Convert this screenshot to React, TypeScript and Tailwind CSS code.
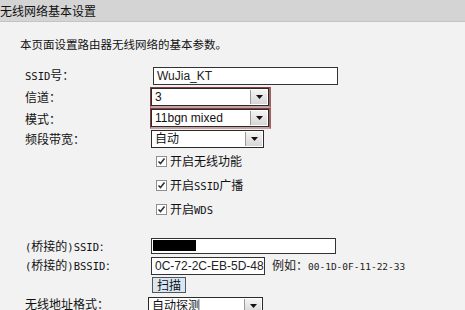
import React from "react";

const cjk = "font-['Noto_Sans_CJK_SC','Liberation_Sans',sans-serif]";
const mono = "font-['DejaVu_Sans_Mono','Noto_Sans_CJK_SC',monospace] text-[10.5px]";

function Arrow() {
  return (
    <div className="w-[17px] h-full border-l border-[#9a9a9a] bg-gradient-to-b from-[#f4f4f4] to-[#d6d6d6] flex items-center justify-center">
      <svg width="7" height="4" viewBox="0 0 7 4">
        <path d="M0 0H7L3.5 4Z" fill="#111" />
      </svg>
    </div>
  );
}

function Select({ text, w, red }: { text: string; w: string; red?: boolean }) {
  const inner = (
    <div className={`${w} h-[18px] border border-[#2a2a2a] bg-white flex items-stretch`}>
      <div className="flex-1 pl-[3px] flex items-center text-[12px] leading-none text-[#111] font-['Liberation_Sans','Noto_Sans_CJK_SC',sans-serif]">
        {text}
      </div>
      <div className="p-[1px] flex">
        <Arrow />
      </div>
    </div>
  );
  if (red) {
    return <div className="border border-[#8a3c3c] border-r-[2px] border-b-[2px] border-b-[#c9a3a3] border-r-[#a06060]">{inner}</div>;
  }
  return inner;
}

function Check({ label }: { label: React.ReactNode }) {
  return (
    <div className="h-[24px] flex items-center pl-[156px]">
      <div className="w-[11px] h-[11px] border border-[#8f8f8f] bg-white flex items-center justify-center">
        <svg width="9" height="9" viewBox="0 0 9 9">
          <path d="M1.5 4.5L3.5 6.5L7.5 1.5" stroke="#333" strokeWidth="1.6" fill="none" />
        </svg>
      </div>
      <span className={`ml-[3px] text-[12px] leading-none text-[#111] ${cjk}`}>{label}</span>
    </div>
  );
}

function Row({ label, h, children }: { label: React.ReactNode; h: string; children: React.ReactNode }) {
  return (
    <div className={`${h} flex items-center`}>
      <div className={`w-[151px] shrink-0 pl-[25px] text-[12px] leading-none text-[#111] ${cjk}`}>{label}</div>
      <div className="flex items-center">{children}</div>
    </div>
  );
}

export default function App() {
  return (
    <div className={`w-[465px] h-[310px] overflow-hidden bg-[#f2f2f2] ${cjk}`}>
      <div className="h-[22px] bg-[#d4d4d4] border-b border-[#c4c4c4] flex items-center text-[12px] text-[#111] leading-none">
        无线网络基本设置
      </div>
      <div className="mt-[15px] pl-[20px] text-[11.5px] leading-[14px] text-[#111]">
        本页面设置路由器无线网络的基本参数。
      </div>
      <div className="mt-[14px] flex flex-col">
        <Row label={<><span className={mono}>SSID</span>号：</>} h="h-[21px]">
          <div className="ml-[2px] w-[185px] h-[18px] border border-[#333] bg-white flex items-center pl-[3px] text-[12px] text-[#222] font-['Liberation_Sans',sans-serif]">
            WuJia_KT
          </div>
        </Row>
        <Row label="信道：" h="h-[22px]">
          <div className="-ml-[1px]">
            <Select text="3" w="w-[118px]" red />
          </div>
        </Row>
        <Row label="模式：" h="h-[21px]">
          <div className="-ml-[1px]">
            <Select text="11bgn mixed" w="w-[118px]" red />
          </div>
        </Row>
        <Row label="频段带宽：" h="h-[20px]">
          <Select text="自动" w="w-[113px]" />
        </Row>
        <Check label="开启无线功能" />
        <Check label={<>开启<span className={mono}>SSID</span>广播</>} />
        <Check label={<>开启<span className={mono}>WDS</span></>} />
        <div className="h-[16px]" />
        <Row label={<><span className={mono}>(</span>桥接的<span className={mono}>)SSID：</span></>} h="h-[18px]">
          <div className="w-[185px] h-[16px] border border-[#333] bg-white flex items-start p-[1px]">
            <div className="w-[43px] h-[11px] bg-black" />
          </div>
        </Row>
        <Row label={<><span className={mono}>(</span>桥接的<span className={mono}>)BSSID：</span></>} h="h-[21px]">
          <div className="w-[114px] h-[18px] border border-[#333] bg-white flex items-center pl-[3px] text-[12px] text-[#222] font-['Liberation_Sans',sans-serif]">
            0C-72-2C-EB-5D-48
          </div>
          <span className="ml-[7px] text-[12px] leading-none text-[#222] whitespace-nowrap">
            例如：<span className="font-['DejaVu_Sans_Mono',monospace] text-[9.5px]">00-1D-0F-11-22-33</span>
          </span>
        </Row>
        <Row label="" h="h-[18px]">
          <div className="ml-[1px] w-[34px] h-[16px] border border-[#555] bg-[#d9e6f4] flex items-center justify-center text-[12px] leading-none text-[#111]">
            扫描
          </div>
        </Row>
        <Row label="无线地址格式：" h="h-[20px]">
          <div className="-ml-[3px] mt-[4px]">
            <Select text="自动探测" w="w-[115px]" />
          </div>
        </Row>
      </div>
    </div>
  );
}
